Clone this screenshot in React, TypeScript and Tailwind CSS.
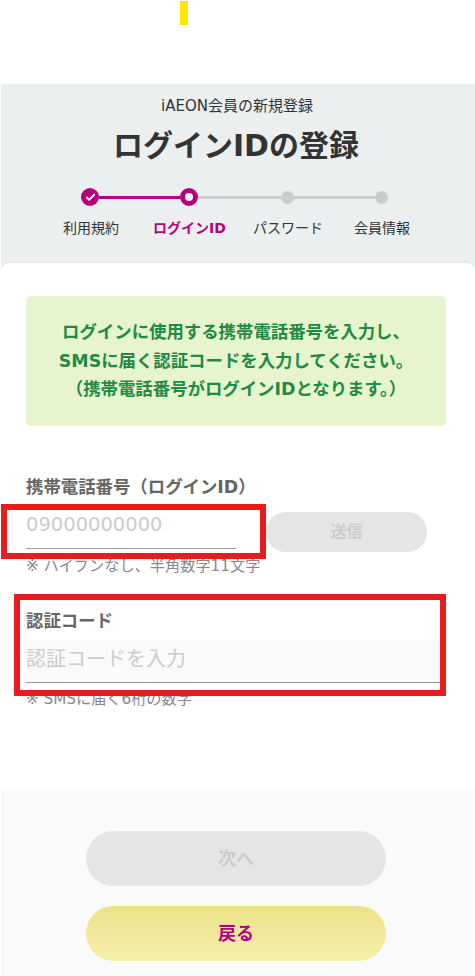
import React from 'react';
import { Check } from 'lucide-react';

const font = 'font-["DejaVu_Sans","Noto_Sans_CJK_JP",sans-serif]';

export default function App() {
  return (
    <div className={`relative min-h-[976px] w-[475px] overflow-hidden bg-white pl-px pt-[84px] ${font}`}>
      {/* stray yellow marker at the top */}
      <div className="absolute left-[180px] top-px h-6 w-2 bg-[#ffe600]" />

      {/* Header */}
      <div className="h-[190px] bg-[#ebeff0] text-center text-[#333]">
        <p className="pr-[2px] pt-[12px] text-[15px] leading-[20px]">iAEON会員の新規登録</p>
        <h1 className="mt-[8px] pr-[4px] text-[30px] font-bold leading-[44px]">ログインIDの登録</h1>

        {/* Stepper */}
        <div className="mt-[20px] flex items-center pl-[80px]">
          <div className="flex h-[18px] w-[18px] items-center justify-center rounded-full bg-[#b4007f]">
            <Check className="h-[11px] w-[11px] text-white" strokeWidth={4} />
          </div>
          <div className="h-[3px] w-[81px] bg-[#b4007f]" />
          <div className="h-[18px] w-[18px] rounded-full border-[5px] border-[#b4007f] bg-white" />
          <div className="h-[3px] w-[83px] bg-[#ccc]" />
          <div className="h-[13px] w-[13px] rounded-full bg-[#ccc]" />
          <div className="h-[3px] w-[81px] bg-[#ccc]" />
          <div className="h-[13px] w-[13px] rounded-full bg-[#ccc]" />
        </div>
        <div className="mt-[12px] flex pl-[62px] text-[14px] leading-[20px]">
          <span className="w-[90px] text-left">利用規約</span>
          <span className="w-[100px] text-left font-bold text-[#b4007f]">ログインID</span>
          <span className="w-[101px] text-left">パスワード</span>
          <span className="text-left">会員情報</span>
        </div>
      </div>

      {/* Form card */}
      <div className="-mt-[11px] h-[528px] rounded-t-[8px] bg-white px-[25px] pt-[33px] shadow-[0_-1px_1px_rgba(0,0,0,0.04)]">
        <div className="flex h-[130px] w-[420px] items-center justify-center rounded-[5px] bg-[#e6f5cd] text-center text-[17.4px] font-bold leading-[28.5px] text-[#1f8a45]">
          <p>
            ログインに使用する携帯電話番号を入力し、
            <br />
            SMSに届く認証コードを入力してください。
            <br />
            （携帯電話番号がログインIDとなります。）
          </p>
        </div>

        <label className="mt-[49px] block text-[17.4px] font-bold leading-[24px] text-[#666]">
          携帯電話番号（ログインID）
        </label>
        <div className="mt-[7px] flex items-start gap-[30px]">
          <input
            className="h-[43px] w-[210px] border-b border-[#999] bg-transparent pb-[6px] text-[19.5px] outline-none placeholder:text-[#ccc]"
            placeholder="09000000000"
          />
          <button
            disabled
            className="mt-[6px] h-[40px] w-[161px] rounded-full bg-[#e5e5e5] text-[16px] font-bold text-[#ccc]"
          >
            送信
          </button>
        </div>
        <p className="mt-[4px] text-[15.2px] leading-[20px] text-[#888]">※ ハイフンなし、半角数字11文字</p>

        <label className="mt-[33px] block text-[17.4px] font-bold leading-[24px] text-[#666]">認証コード</label>
        <input
          className="mt-[7px] block h-[43px] w-[414px] border-b border-[#999] bg-[#fafafa] pb-[4px] text-[20px] outline-none placeholder:text-[#ccc]"
          placeholder="認証コードを入力"
        />
        <p className="mt-[6px] text-[15.2px] leading-[20px] text-[#888]">※ SMSに届く6桁の数字</p>
      </div>

      {/* Footer buttons */}
      <div className="flex h-[185px] flex-col items-center gap-[20px] bg-[#fafafa] pr-1 pt-[40px]">
        <button disabled className="h-[55px] w-[300px] rounded-full bg-[#e5e5e5] text-[18px] font-bold text-[#ccc]">
          次へ
        </button>
        <button className="h-[55px] w-[300px] rounded-full bg-gradient-to-b from-[#ebe28a] to-[#f5efaa] text-[18px] font-bold text-[#b4007f]">
          戻る
        </button>
      </div>

      {/* Red annotation boxes drawn over the form */}
      <div className="absolute left-px top-[504px] h-[55px] w-[265px] border-[6px] border-[#e71d1d]" />
      <div className="absolute left-[14px] top-[594px] h-[102px] w-[432px] border-[6px] border-[#e71d1d]" />
    </div>
  );
}
